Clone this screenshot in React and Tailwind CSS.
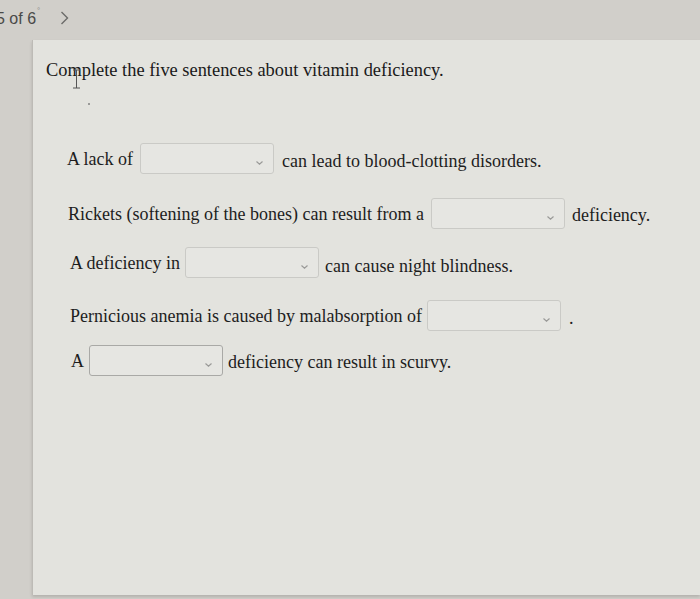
import React from 'react';

const Blank = ({ className = '', dark = false }) => (
  <div
    className={`relative h-[31px] w-[134px] rounded-[3px] border bg-[#e6e6e2] ${
      dark ? 'border-[#a9a9a6]' : 'border-[#cacac6]'
    } ${className}`}
  >
    <svg
      className="absolute right-[10px] top-[17px]"
      width="7"
      height="4"
      viewBox="0 0 7 4"
    >
      <path d="M0.5 0.5 L3.5 3.2 L6.5 0.5" fill="none" stroke="#9a9a98" strokeWidth="1.2" />
    </svg>
  </div>
);

const Row = ({ className = '', children }) => (
  <div className={`flex items-center text-[18px] leading-none text-[#1d1d1d] ${className}`}>
    {children}
  </div>
);

export default function App() {
  return (
    <div className="h-[599px] w-[700px] overflow-hidden bg-[#d1cfca] font-['Liberation_Serif',serif]">
      {/* pager strip */}
      <div className="flex h-[40px] items-start pt-[7px] font-['Liberation_Sans',sans-serif] text-[16px] text-[#4a4a48]">
        <span className="-ml-[4px]">5 of 6</span>
        <span className="ml-[1px] -mt-[2px] text-[8px] text-[#8a8a88]">°</span>
        <svg className="ml-[20px] mt-[4px]" width="9" height="14" viewBox="0 0 9 14">
          <path d="M1.5 1 L7.5 7 L1.5 13" fill="none" stroke="#6b6b69" strokeWidth="1.4" />
        </svg>
      </div>

      {/* question card */}
      <div className="ml-[32px] h-[555px] border-l border-[#bdbbb6] bg-[#e3e3de] pl-[13px] pt-[21px] shadow-[0_2px_3px_rgba(0,0,0,0.15)]">
        <div className="relative">
          <h1 className="text-[18.4px] leading-none text-[#1a1a1a]">
            Complete the five sentences about vitamin deficiency.
          </h1>
          {/* text cursor */}
          <svg className="absolute left-[26px] top-[8px]" width="9" height="20" viewBox="0 0 9 20">
            <path d="M1 1 H8 M4.5 1 V19 M1 19 H8" fill="none" stroke="#555" strokeWidth="1" />
          </svg>
          <div className="absolute left-[42px] top-[42px] h-[2px] w-[2px] bg-[#9a9a98]" />
        </div>

        <div className="flex flex-col">
          <Row className="ml-[21px] mt-[64px]">
            <span>A lack of</span>
            <Blank className="ml-[7px]" />
            <span className="ml-[8px] mt-[5px]">can lead to blood-clotting disorders.</span>
          </Row>

          <Row className="ml-[22px] mt-[24px]">
            <span>Rickets (softening of the bones) can result from a</span>
            <Blank className="ml-[7px]" />
            <span className="ml-[7px] mt-[3px]">deficiency.</span>
          </Row>

          <Row className="ml-[24px] mt-[18px]">
            <span>A deficiency in</span>
            <Blank className="ml-[5px]" />
            <span className="ml-[6px] mt-[6px]">can cause night blindness.</span>
          </Row>

          <Row className="ml-[24px] mt-[22px]">
            <span>Pernicious anemia is caused by malabsorption of</span>
            <Blank className="ml-[5px]" />
            <span className="ml-[8px] mt-[5px]">.</span>
          </Row>

          <Row className="ml-[25px] mt-[14px]">
            <span>A</span>
            <Blank className="ml-[5px]" dark />
            <span className="ml-[5px] mt-[3px]">deficiency can result in scurvy.</span>
          </Row>
        </div>
      </div>
    </div>
  );
}
